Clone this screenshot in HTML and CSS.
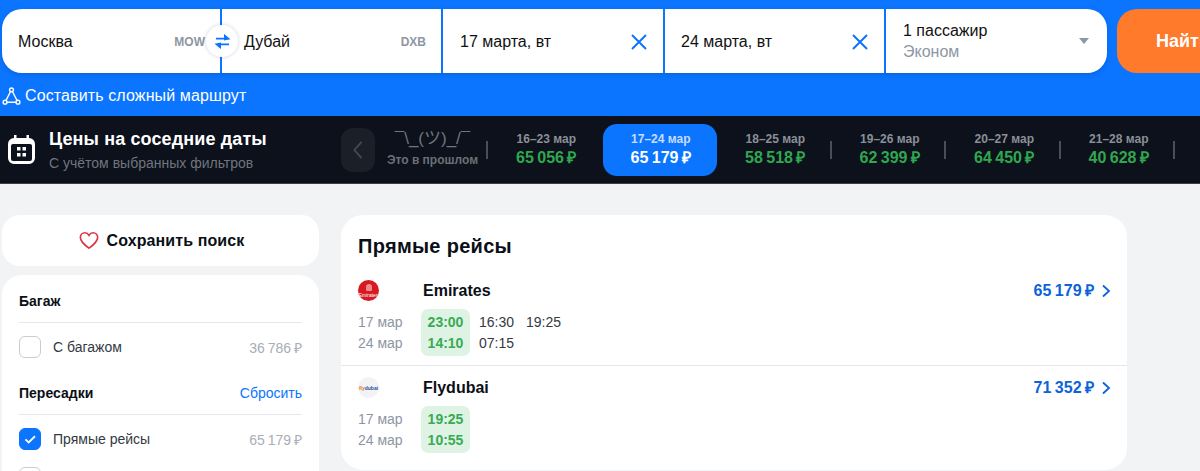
FILE: index.html
```html
<!DOCTYPE html>
<html lang="ru">
<head>
<meta charset="utf-8">
<title>Москва — Дубай</title>
<link rel="stylesheet" href="styles.css">
</head>
<body>
<header class="hero">
  <div class="search">
    <div class="fields">
      <div class="field field-origin"><span class="city">Москва</span><span class="iata">MOW</span></div>
      <div class="field field-dest"><span class="city">Дубай</span><span class="iata">DXB</span></div>
      <div class="field field-date field-date1"><span class="city">17 марта, вт</span>
        <svg class="clear" viewBox="0 0 18 18"><path d="M2 2l14 14M16 2L2 16"/></svg></div>
      <div class="field field-date field-date2"><span class="city">24 марта, вт</span>
        <svg class="clear" viewBox="0 0 18 18"><path d="M2 2l14 14M16 2L2 16"/></svg></div>
      <div class="field field-pax">
        <div class="pax"><span class="city">1 пассажир</span><span class="cabin">Эконом</span></div>
        <span class="caret"></span>
      </div>
      <div class="swap">
        <svg viewBox="0 0 18 16"><path d="M2 5h13M11.500 1.800L15.500 5l-4 .9zM16 11H3M6.500 14.200L2.500 11l4-.9z"/></svg>
      </div>
    </div>
    <button class="find">Найти</button>
  </div>
  <a class="route">
    <svg viewBox="0 0 20 20"><circle cx="10" cy="3.500" r="2"/><circle cx="3.200" cy="16.500" r="2"/><circle cx="16.800" cy="16.500" r="2"/><path d="M9 5.300L4.200 14.700M11 5.300l4.800 9.400M5.200 16.500h9.600"/></svg>
    <span>Составить сложный маршрут</span>
  </a>
</header>

<section class="dates">
  <svg class="cal" viewBox="0 0 27 29"><path class="cal-fill" d="M6 0h2.500v3H18.500V0H21v3a6 6 0 0 1 6 6v14a6 6 0 0 1-6 6H6a6 6 0 0 1-6-6V9a6 6 0 0 1 6-6z"/><rect class="cal-window" x="3" y="9" width="21" height="17" rx="2"/><path class="cal-fill" d="M9 12h3.500v3.500H9zM14.500 12H18v3.500h-3.500zM9 18h3.500v3.500H9zM14.500 18H18v3.500h-3.500z"/></svg>
  <div class="dates-head">
    <div class="dates-title">Цены на соседние даты</div>
    <div class="dates-sub">С учётом выбранных фильтров</div>
  </div>
  <button class="prev"><svg viewBox="0 0 12 22"><path d="M10 2L2 11l8 9"/></svg></button>
  <div class="past"><span class="shrug">¯\_(ツ)_/¯</span><span class="past-label">Это в прошлом</span></div>
  <div class="cell"><span class="cell-date">16–23 мар</span><span class="cell-price">65 056 ₽</span></div>
  <div class="cell cell-active"><span class="cell-date">17–24 мар</span><span class="cell-price">65 179 ₽</span></div>
  <div class="cell cell-line"><span class="cell-date">18–25 мар</span><span class="cell-price">58 518 ₽</span></div>
  <div class="cell cell-line"><span class="cell-date">19–26 мар</span><span class="cell-price">62 399 ₽</span></div>
  <div class="cell cell-line"><span class="cell-date">20–27 мар</span><span class="cell-price">64 450 ₽</span></div>
  <div class="cell cell-line"><span class="cell-date">21–28 мар</span><span class="cell-price">40 628 ₽</span></div>
</section>

<main class="content">
  <aside class="side">
    <button class="save">
      <svg viewBox="0 0 22 20"><path d="M11 18.500C5 13.800 1.500 10.800 1.500 6.700 1.500 3.700 3.800 1.500 6.500 1.500c1.900 0 3.500 1 4.500 2.800 1-1.800 2.600-2.800 4.500-2.800 2.700 0 5 2.200 5 5.200 0 4.100-3.500 7.100-9.500 11.800z"/></svg>
      <span>Сохранить поиск</span>
    </button>
    <div class="filters">
      <div class="filter-head filter-first"><span>Багаж</span></div>
      <div class="opt"><span class="check"></span><span class="opt-name">С багажом</span><span class="opt-price">36 786 ₽</span></div>
      <div class="filter-head filter-next"><span>Пересадки</span><a class="reset">Сбросить</a></div>
      <div class="opt"><span class="check check-on"><svg viewBox="0 0 22 22"><path d="M6 11.500l3.500 3.300L16.500 8"/></svg></span><span class="opt-name">Прямые рейсы</span><span class="opt-price">65 179 ₽</span></div>
      <div class="opt opt-cut"><span class="check"></span></div>
    </div>
  </aside>

  <section class="results">
    <h2 class="results-title">Прямые рейсы</h2>
    <article class="flight">
      <div class="flight-head">
        <span class="logo logo-ek"><b class="ek-mark"></b>Emirates</span>
        <span class="airline">Emirates</span>
        <span class="price">65 179 ₽</span>
        <svg class="chev" viewBox="0 0 10 14"><path d="M2 1.500L8 7l-6 5.500"/></svg>
      </div>
      <div class="times">
        <div class="days"><span>17 мар</span><span>24 мар</span></div>
        <div class="best"><span>23:00</span><span>14:10</span></div>
        <div class="others"><div class="other-row"><span>16:30</span><span>19:25</span></div><div class="other-row"><span>07:15</span></div></div>
      </div>
    </article>
    <article class="flight flight-second">
      <div class="flight-head">
        <span class="logo logo-fz"><i>fly</i>dubai</span>
        <span class="airline">Flydubai</span>
        <span class="price">71 352 ₽</span>
        <svg class="chev" viewBox="0 0 10 14"><path d="M2 1.500L8 7l-6 5.500"/></svg>
      </div>
      <div class="times">
        <div class="days"><span>17 мар</span><span>24 мар</span></div>
        <div class="best"><span>19:25</span><span>10:55</span></div>
      </div>
    </article>
  </section>
</main>
</body>
</html>
```
FILE: styles.css
```css
* { box-sizing: border-box; }
html, body { margin: 0; padding: 0; height: 471px; overflow: hidden; }
body { width: 1200px; background: #f2f3f5; color: #0b0f17; font-family: "Liberation Sans", "Noto Sans CJK JP", sans-serif; font-size: 16px; }
button { font: inherit; border: 0; padding: 0; }

.hero { height: 116px; background: #0b75ff; padding: 9px 0 0 2px; overflow: hidden; }
.search { display: flex; height: 64px; }
.fields { position: relative; display: flex; gap: 2px; width: 1105px; flex: none; height: 64px; border-radius: 20px; box-shadow: 0 2px 5px rgba(0, 40, 120, .22); }
.field { display: flex; align-items: center; background: #fff; height: 64px; padding-top: 2px; }
.city { line-height: 20px; color: #111; }
.iata { margin-left: auto; font-size: 12px; font-weight: 700; color: #8d96a3; }
.field-origin { width: 218px; padding-left: 16px; padding-right: 15px; border-radius: 20px 0 0 20px; }
.field-dest { width: 219px; padding-left: 22px; padding-right: 15px; }
.field-date { width: 220px; padding-left: 16px; padding-right: 15px; justify-content: space-between; }
.field-date1 { padding-left: 17px; }
.field-date2 { width: 219px; }
.field-pax { flex: 1; padding-left: 17px; padding-right: 18px; justify-content: space-between; border-radius: 0 20px 20px 0; }
.clear { width: 18px; height: 18px; fill: none; stroke: #0b75ff; stroke-width: 2; }
.pax { display: flex; flex-direction: column; }
.cabin { color: #8d96a3; line-height: 22px; }
.caret { width: 0; height: 0; margin-top: -2px; border: 5px solid transparent; border-top: 6px solid #8d96a3; border-bottom: 0; }
.swap { position: absolute; left: 204px; top: 16px; width: 32px; height: 32px; border-radius: 50%; background: #fff; display: flex; align-items: center; justify-content: center; box-shadow: 0 0 4px rgba(0, 40, 120, .2); }
.swap svg { width: 17px; height: 15px; fill: #0b75ff; stroke: #0b75ff; stroke-width: 1.800; }
.find { width: 83px; flex: none; margin-left: 10px; height: 64px; border-radius: 20px 0 0 20px; background: #ff7a2b; color: #fff; font-size: 18px; font-weight: 700; text-align: left; padding-left: 39px; white-space: nowrap; overflow: hidden; }
.route { display: flex; align-items: center; gap: 4px; margin-top: 12px; color: #fff; line-height: 22px; letter-spacing: .12px; }
.route svg { width: 19px; height: 20px; fill: none; stroke: #fff; stroke-width: 1.500; }

.dates { display: flex; align-items: center; height: 68px; background: #0c111b; border-bottom: 1px solid #3a3e46; padding-left: 8px; }
.cal { width: 27px; height: 29px; flex: none; }
.cal-fill { fill: #fff; }
.cal-window { fill: #0c111b; }
.dates-head { width: 292px; margin-left: 14px; flex: none; }
.dates-title { font-size: 18px; font-weight: 700; color: #fff; line-height: 22px; letter-spacing: .12px; margin-top: 1px; }
.dates-sub { font-size: 14px; color: #70757e; line-height: 20px; margin-top: 3px; }
.prev { width: 34px; height: 44px; flex: none; border-radius: 12px; background: #1a1f28; display: flex; align-items: center; justify-content: center; }
.prev svg { width: 12px; height: 20px; fill: none; stroke: #454a52; stroke-width: 2; }
.past { width: 113px; height: 38px; flex: none; display: flex; flex-direction: column; align-items: center; position: relative; padding-left: 2px; }
.past::after, .cell-line::after { content: ""; position: absolute; right: 0; top: 50%; height: 18px; margin-top: -9px; width: 2px; background: #4a4e56; }
.shrug { font-size: 17px; line-height: 21px; color: #70757e; white-space: nowrap; margin-top: -3px; }
.past-label { font-size: 12px; font-weight: 700; line-height: 16px; margin-top: 3px; color: #6b7078; white-space: nowrap; }
.cell { position: relative; width: 114.500px; height: 52px; flex: none; display: flex; flex-direction: column; align-items: center; justify-content: center; border-radius: 14px; padding-left: 2px; }
.cell-date { font-size: 12px; font-weight: 700; color: #8a8f97; line-height: 16px; }
.cell-price { font-size: 16px; font-weight: 700; color: #2fa84f; line-height: 20px; margin-top: 1px; margin-bottom: 1px; word-spacing: -1px; }
.cell-active { background: #0b75ff; }
.cell-active .cell-date { color: #c7dcff; }
.cell-active .cell-price { color: #fff; }

.content { display: flex; align-items: flex-start; gap: 22px; padding: 31px 0 0 2px; }
.side { width: 317px; flex: none; }
.save { display: flex; align-items: center; justify-content: center; gap: 8px; width: 100%; height: 51px; padding-left: 2px; background: #fff; border-radius: 18px; font-weight: 700; color: #0b0f17; letter-spacing: .1px; }
.save svg { width: 20px; height: 19px; fill: none; stroke: #dc3545; stroke-width: 1.800; }
.filters { margin-top: 9px; background: #fff; border-radius: 20px 20px 0 0; padding: 0 17px; height: 200px; }
.filter-head { display: flex; justify-content: space-between; align-items: center; font-size: 14px; font-weight: 700; height: 30px; border-bottom: 1px solid #e6e7ea; padding-bottom: 6px; box-sizing: content-box; }
.filter-first { padding-top: 11px; }
.filter-next { margin-top: 20px; }
.reset { font-weight: 400; color: #0b75ff; }
.opt { display: flex; align-items: center; height: 22px; margin-top: 13px; font-size: 14px; }
.opt-cut { margin-top: 17px; }
.check { width: 22px; height: 22px; border: 1px solid #c9ccd1; border-radius: 6px; flex: none; }
.check-on { background: #0b75ff; border-color: #0b75ff; display: block; }
.check-on svg { display: block; width: 20px; height: 20px; fill: none; stroke: #fff; stroke-width: 2; }
.opt-name { margin-left: 12px; color: #333a44; }
.opt-price { margin-left: auto; color: #a9adb6; word-spacing: -1px; }

.results { width: 786px; height: 255px; flex: none; background: #fff; border-radius: 22px; padding-top: 19px; }
.results-title { margin: 0 0 0 17px; font-size: 20px; font-weight: 700; line-height: 24px; letter-spacing: .3px; color: #0b0f17; }
.flight { padding: 0 0 9px 12px; }
.flight:first-of-type { margin-top: 22px; }
.flight-second { border-top: 1px solid #e6e7ea; padding-top: 11px; }
.flight-head { display: flex; align-items: center; height: 21px; padding-left: 5px; }
.logo { width: 21px; height: 21px; border-radius: 50%; flex: none; display: flex; align-items: center; justify-content: center; font-size: 5px; overflow: hidden; }
.logo-ek { background: #d71a21; color: #fff; flex-direction: column; gap: 1px; }
.ek-mark { width: 6px; height: 7px; border-radius: 3px 3px 1px 1px; background: #ec8a8d; }
.logo-fz { background: #f2f3f5; color: #27508c; font-weight: 700; }
.logo-fz i { color: #e07b28; font-style: normal; }
.airline { margin-left: 44px; font-weight: 700; color: #0b0f17; }
.price { margin-left: auto; margin-top: -2px; font-weight: 700; color: #0c63d8; word-spacing: -1px; }
.chev { width: 10px; height: 14px; margin: 0 16px 0 7px; fill: none; stroke: #0c63d8; stroke-width: 1.800; }
.times { display: flex; margin-top: 8px; font-size: 14px; line-height: 21px; }
.days { width: 56px; margin-left: 5px; flex: none; display: flex; flex-direction: column; color: #8d96a3; padding-top: 3px; }
.best { width: 49px; height: 47px; margin-left: 7px; flex: none; display: flex; flex-direction: column; align-items: center; padding-top: 3px; background: #dff3e4; border-radius: 7px; color: #3aaa55; font-weight: 700; }
.others { margin-left: 9px; color: #333a44; padding-top: 3px; }
.other-row { display: flex; gap: 12px; }
```
